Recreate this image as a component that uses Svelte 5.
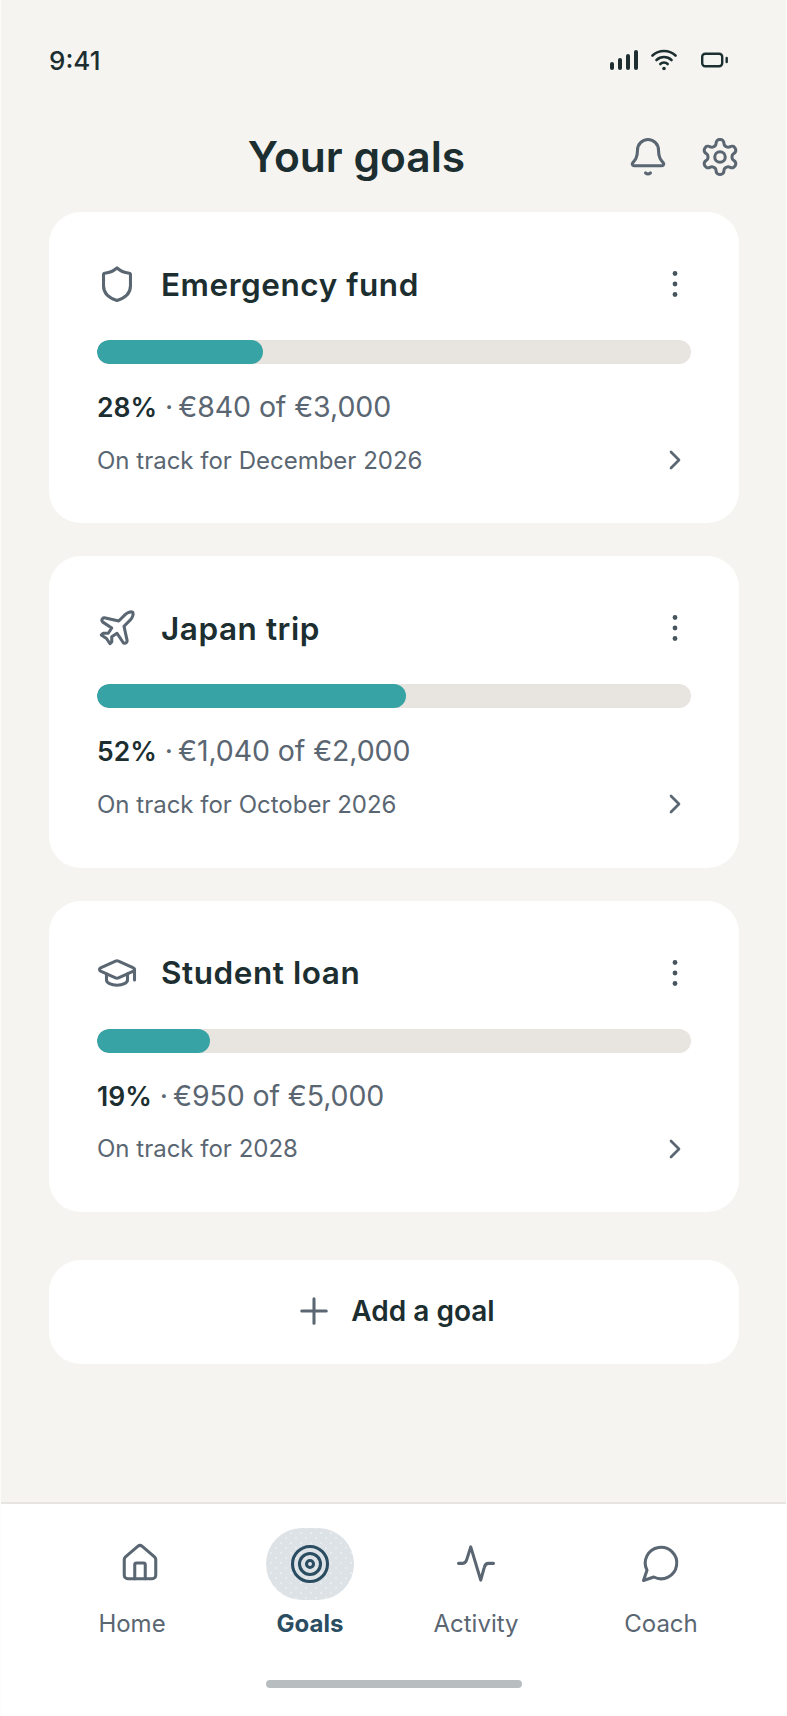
<script>
	const goals = [
		{ name: 'Emergency fund', icon: 'shield', pct: 28, amount: '€840 of €3,000', when: 'December 2026' },
		{ name: 'Japan trip', icon: 'plane', pct: 52, amount: '€1,040 of €2,000', when: 'October 2026' },
		{ name: 'Student loan', icon: 'cap', pct: 19, amount: '€950 of €5,000', when: '2028' }
	];
</script>

{#snippet goalIcon(kind)}
	<svg class="icon goal-icon" viewBox="0 0 24 24">
		{#if kind === 'shield'}
			<path d="M12 2.8C13.8 4.6 16.5 5.6 19 5.9a.8.8 0 0 1 .7.8V13C19.7 17.5 16 20.2 12 21.4 8 20.2 4.3 17.5 4.3 13V6.7a.8.8 0 0 1 .7-.8C7.5 5.6 10.2 4.6 12 2.8Z" />
		{:else if kind === 'plane'}
			<path d="M17.8 19.2 16 11l3.5-3.5C21 6 21.5 4 21 3c-1-.5-3 0-4.5 1.5L13 8 4.8 6.2c-.5-.1-.9.1-1.1.5l-.3.5c-.2.5-.1 1 .3 1.3L9 12l-2 3H4l-1 1 3 2 2 3 1-1v-3l3-2 3.5 5.3c.3.4.8.5 1.3.3l.5-.2c.4-.3.6-.7.5-1.2z" />
		{:else}
			<path d="M21.42 10.922a1 1 0 0 0-.019-1.838L12.83 5.18a2 2 0 0 0-1.66 0L2.6 9.08a1 1 0 0 0 0 1.832l8.57 3.908a2 2 0 0 0 1.66 0z" />
			<path d="M22 10v6" />
			<path d="M6 12.5V16a6 3 0 0 0 12 0v-3.5" />
		{/if}
	</svg>
{/snippet}

<div class="screen">
	<div class="status">
		<span class="time">9:41</span>
		<div class="status-icons">
			<svg class="signal" viewBox="0 0 28 20">
				<rect x="0" y="12" width="4" height="8" rx="2" />
				<rect x="8" y="8" width="4" height="12" rx="2" />
				<rect x="16" y="4" width="4" height="16" rx="2" />
				<rect x="24" y="0" width="4" height="20" rx="2" />
			</svg>
			<svg class="wifi" viewBox="0 0 26 22">
				<path d="M1.5 6.5a17 17 0 0 1 23 0" />
				<path d="M5.5 11a11 11 0 0 1 15 0" />
				<path d="M9.3 15a5.5 5.5 0 0 1 7.4 0" />
				<circle cx="13" cy="19.5" r="1.8" />
			</svg>
			<svg class="battery" viewBox="0 0 27 16">
				<rect x="1.2" y="1.7" width="20" height="12.6" rx="3" />
				<path d="M25.7 6v4" />
			</svg>
		</div>
	</div>

	<header class="top">
		<h1>Your goals</h1>
		<div class="top-actions">
			<svg class="icon" viewBox="0 0 24 24">
				<path d="M3.262 15.326A1 1 0 0 0 4 17h16a1 1 0 0 0 .74-1.673C19.41 13.956 18 12.499 18 8A6 6 0 0 0 6 8c0 4.499-1.411 5.956-2.738 7.326" />
				<path d="M10.6 21.1q1.4 1.1 2.8 0" />
			</svg>
			<svg class="icon" viewBox="0 0 24 24">
				<path d="M12.22 2h-.44a2 2 0 0 0-2 2v.18a2 2 0 0 1-1 1.73l-.43.25a2 2 0 0 1-2 0l-.15-.08a2 2 0 0 0-2.73.73l-.22.38a2 2 0 0 0 .73 2.73l.15.1a2 2 0 0 1 1 1.72v.51a2 2 0 0 1-1 1.74l-.15.09a2 2 0 0 0-.73 2.73l.22.38a2 2 0 0 0 2.73.73l.15-.08a2 2 0 0 1 2 0l.43.25a2 2 0 0 1 1 1.73V20a2 2 0 0 0 2 2h.44a2 2 0 0 0 2-2v-.18a2 2 0 0 1 1-1.73l.43-.25a2 2 0 0 1 2 0l.15.08a2 2 0 0 0 2.73-.73l.22-.39a2 2 0 0 0-.73-2.73l-.15-.08a2 2 0 0 1-1-1.74v-.5a2 2 0 0 1 1-1.74l.15-.09a2 2 0 0 0 .73-2.73l-.22-.38a2 2 0 0 0-2.73-.73l-.15.08a2 2 0 0 1-2 0l-.43-.25a2 2 0 0 1-1-1.73V4a2 2 0 0 0-2-2z" />
				<circle cx="12" cy="12" r="3" />
			</svg>
		</div>
	</header>

	<main class="list">
		{#each goals as goal}
			<section class="card">
				<div class="card-head">
					{@render goalIcon(goal.icon)}
					<h2>{goal.name}</h2>
					<svg class="kebab" viewBox="0 0 8 32">
						<circle cx="4" cy="5.5" r="2.4" />
						<circle cx="4" cy="16" r="2.4" />
						<circle cx="4" cy="26.5" r="2.4" />
					</svg>
				</div>
				<div class="track"><div class="fill" style="width: {goal.pct}%"></div></div>
				<p class="stats"><strong>{goal.pct}%</strong> · <span class="amount">{goal.amount}</span></p>
				<div class="foot">
					<span>On track for {goal.when}</span>
					<svg class="icon chevron" viewBox="0 0 24 24"><path d="m9 18 6-6-6-6" /></svg>
				</div>
			</section>
		{/each}

		<button class="add">
			<svg class="icon" viewBox="0 0 24 24"><path d="M5 12h14" /><path d="M12 5v14" /></svg>
			<span>Add a goal</span>
		</button>
	</main>

	<nav class="tabs">
		<div class="tab">
			<svg class="icon home-icon" viewBox="0 0 24 24">
				<path d="M15 21v-8a1 1 0 0 0-1-1h-4a1 1 0 0 0-1 1v8" />
				<path d="M3 10a2 2 0 0 1 .709-1.528l7-5.999a2 2 0 0 1 2.582 0l7 5.999A2 2 0 0 1 21 10v9a2 2 0 0 1-2 2H5a2 2 0 0 1-2-2z" />
			</svg>
			<span>Home</span>
		</div>
		<div class="tab active">
			<div class="pill">
				<svg class="icon" viewBox="0 0 24 24">
					<circle cx="12" cy="12" r="10" />
					<circle cx="12" cy="12" r="6" />
					<circle cx="12" cy="12" r="2" />
				</svg>
			</div>
			<span>Goals</span>
		</div>
		<div class="tab">
			<svg class="icon" viewBox="0 0 24 24">
				<path d="M2 12.2h2.4c1.4 0 2-1 2.4-2.4L9 2.8l5.7 19 2-7.2c.4-1.6 1.2-2.4 2.4-2.4H22" />
			</svg>
			<span>Activity</span>
		</div>
		<div class="tab">
			<svg class="icon" viewBox="0 0 24 24">
				<path d="M7.9 20A9 9 0 1 0 4 16.1L2 22Z" />
			</svg>
			<span>Coach</span>
		</div>
	</nav>
	<div class="home-bar"></div>
</div>

<style>
	:global(body) {
		background: #ffffff;
	}

	.screen {
		position: relative;
		display: flex;
		flex-direction: column;
		width: 787px;
		height: 1716px;
		overflow: hidden;
		background: #f5f4f0;
		box-shadow: inset 1px 0 #fcfcfa, inset -1px 0 #fcfcfa;
		font-family: Inter, 'Liberation Sans', sans-serif;
		color: #1c2e30;
	}

	.icon {
		width: 42px;
		height: 42px;
		fill: none;
		stroke: #5a6672;
		stroke-width: 1.75;
		stroke-linecap: round;
		stroke-linejoin: round;
		flex-shrink: 0;
	}

	.status {
		display: flex;
		align-items: center;
		justify-content: space-between;
		height: 28px;
		margin-top: 46px;
		padding: 0 49px;
	}

	.time {
		font-size: 26px;
		font-weight: 500;
	}

	.status-icons {
		display: flex;
		align-items: center;
	}

	.signal {
		width: 28px;
		height: 20px;
		fill: #1c2e30;
	}

	.wifi {
		width: 26px;
		height: 22px;
		margin-left: 13px;
		fill: none;
		stroke: #1c2e30;
		stroke-width: 2.6;
		stroke-linecap: round;
	}

	.wifi circle {
		fill: #1c2e30;
		stroke: none;
	}

	.battery {
		width: 27px;
		height: 16px;
		margin-left: 24px;
		margin-right: 10px;
		fill: none;
		stroke: #1c2e30;
		stroke-width: 2.4;
		stroke-linecap: round;
	}

	.top {
		display: flex;
		align-items: center;
		height: 50px;
		margin-top: 57px;
		padding: 0 46px 0 49px;
	}

	h1 {
		flex: 1;
		margin: 0;
		padding-left: 37px;
		font-size: 42.5px;
		font-weight: 600;
		text-align: center;
	}

	.top-actions {
		display: flex;
		gap: 30px;
		margin-top: 2px;
	}

	.list {
		display: flex;
		flex-direction: column;
		gap: 33px;
		margin-top: 31px;
		padding: 0 48px 0 49px;
	}

	.card {
		height: 311.3px;
		box-sizing: border-box;
		padding: 50px 48px 0;
		background: #ffffff;
		border-radius: 32px;
	}

	.card-head {
		display: flex;
		align-items: center;
		height: 44px;
	}

	.goal-icon {
		margin-right: 23px;
		margin-left: -1px;
	}

	h2 {
		flex: 1;
		margin: 0;
		font-size: 31.5px;
		font-weight: 600;
		letter-spacing: 0.55px;
	}

	.kebab {
		width: 8px;
		height: 32px;
		margin-right: 12px;
		fill: #46555e;
	}

	.track {
		height: 24px;
		margin-top: 34px;
		background: #e8e4df;
		border-radius: 12px;
		overflow: hidden;
	}

	.fill {
		height: 100%;
		background: #38a3a5;
		border-radius: 12px;
	}

	.stats {
		margin: 25px 0 0;
		font-size: 28.5px;
		line-height: 36px;
		color: #5a6672;
	}

	.stats strong {
		font-size: 26.5px;
		font-weight: 600;
		color: #1c2e30;
	}

	.amount {
		margin-left: -3px;
		letter-spacing: -0.1px;
	}

	.foot {
		display: flex;
		align-items: center;
		justify-content: space-between;
		height: 42px;
		margin-top: 14px;
		font-size: 24px;
		color: #5a6672;
	}

	.chevron {
		width: 32px;
		height: 32px;
		stroke-width: 2;
	}

	.add {
		display: flex;
		align-items: center;
		justify-content: center;
		gap: 16px;
		height: 104px;
		margin-top: 15px;
		padding: 0 0 2px;
		border: none;
		background: #ffffff;
		border-radius: 32px;
		font-family: inherit;
		font-size: 28px;
		font-weight: 600;
		color: #1c2e30;
	}

	.tabs {
		position: absolute;
		left: 1px;
		right: 1px;
		top: 1502px;
		bottom: 0;
		display: grid;
		grid-template-columns: 184px 172px 160px 210px;
		padding-left: 39px;
		padding-top: 24px;
		background: #ffffff;
		border-top: 2px solid #e8e4df;
	}

	.tab {
		display: flex;
		flex-direction: column;
		align-items: center;
		font-size: 24px;
		color: #5a6672;
	}

	.tab > .icon {
		padding: 14px 0 16px;
		box-sizing: content-box;
		height: 42px;
	}

	.tab span {
		margin-top: 9px;
	}

	.home-icon {
		margin-left: 16px;
	}

	.pill {
		display: flex;
		align-items: center;
		justify-content: center;
		width: 88px;
		height: 72px;
		background-color: #dde2e6;
		background-image:
			radial-gradient(circle, rgba(255, 255, 255, 0.55) 0.6px, transparent 0.9px),
			radial-gradient(circle, rgba(255, 255, 255, 0.55) 0.6px, transparent 0.9px);
		background-size: 10px 10px;
		background-position: 0 0, 5px 5px;
		border-radius: 36px;
	}

	.active {
		font-weight: 700;
		color: #2a4d62;
	}

	.pill .icon {
		stroke: #2a4d62;
	}

	.home-bar {
		position: absolute;
		left: 266px;
		top: 1680px;
		width: 256px;
		height: 8px;
		background: #b8bdc0;
		border-radius: 4px;
	}
</style>
